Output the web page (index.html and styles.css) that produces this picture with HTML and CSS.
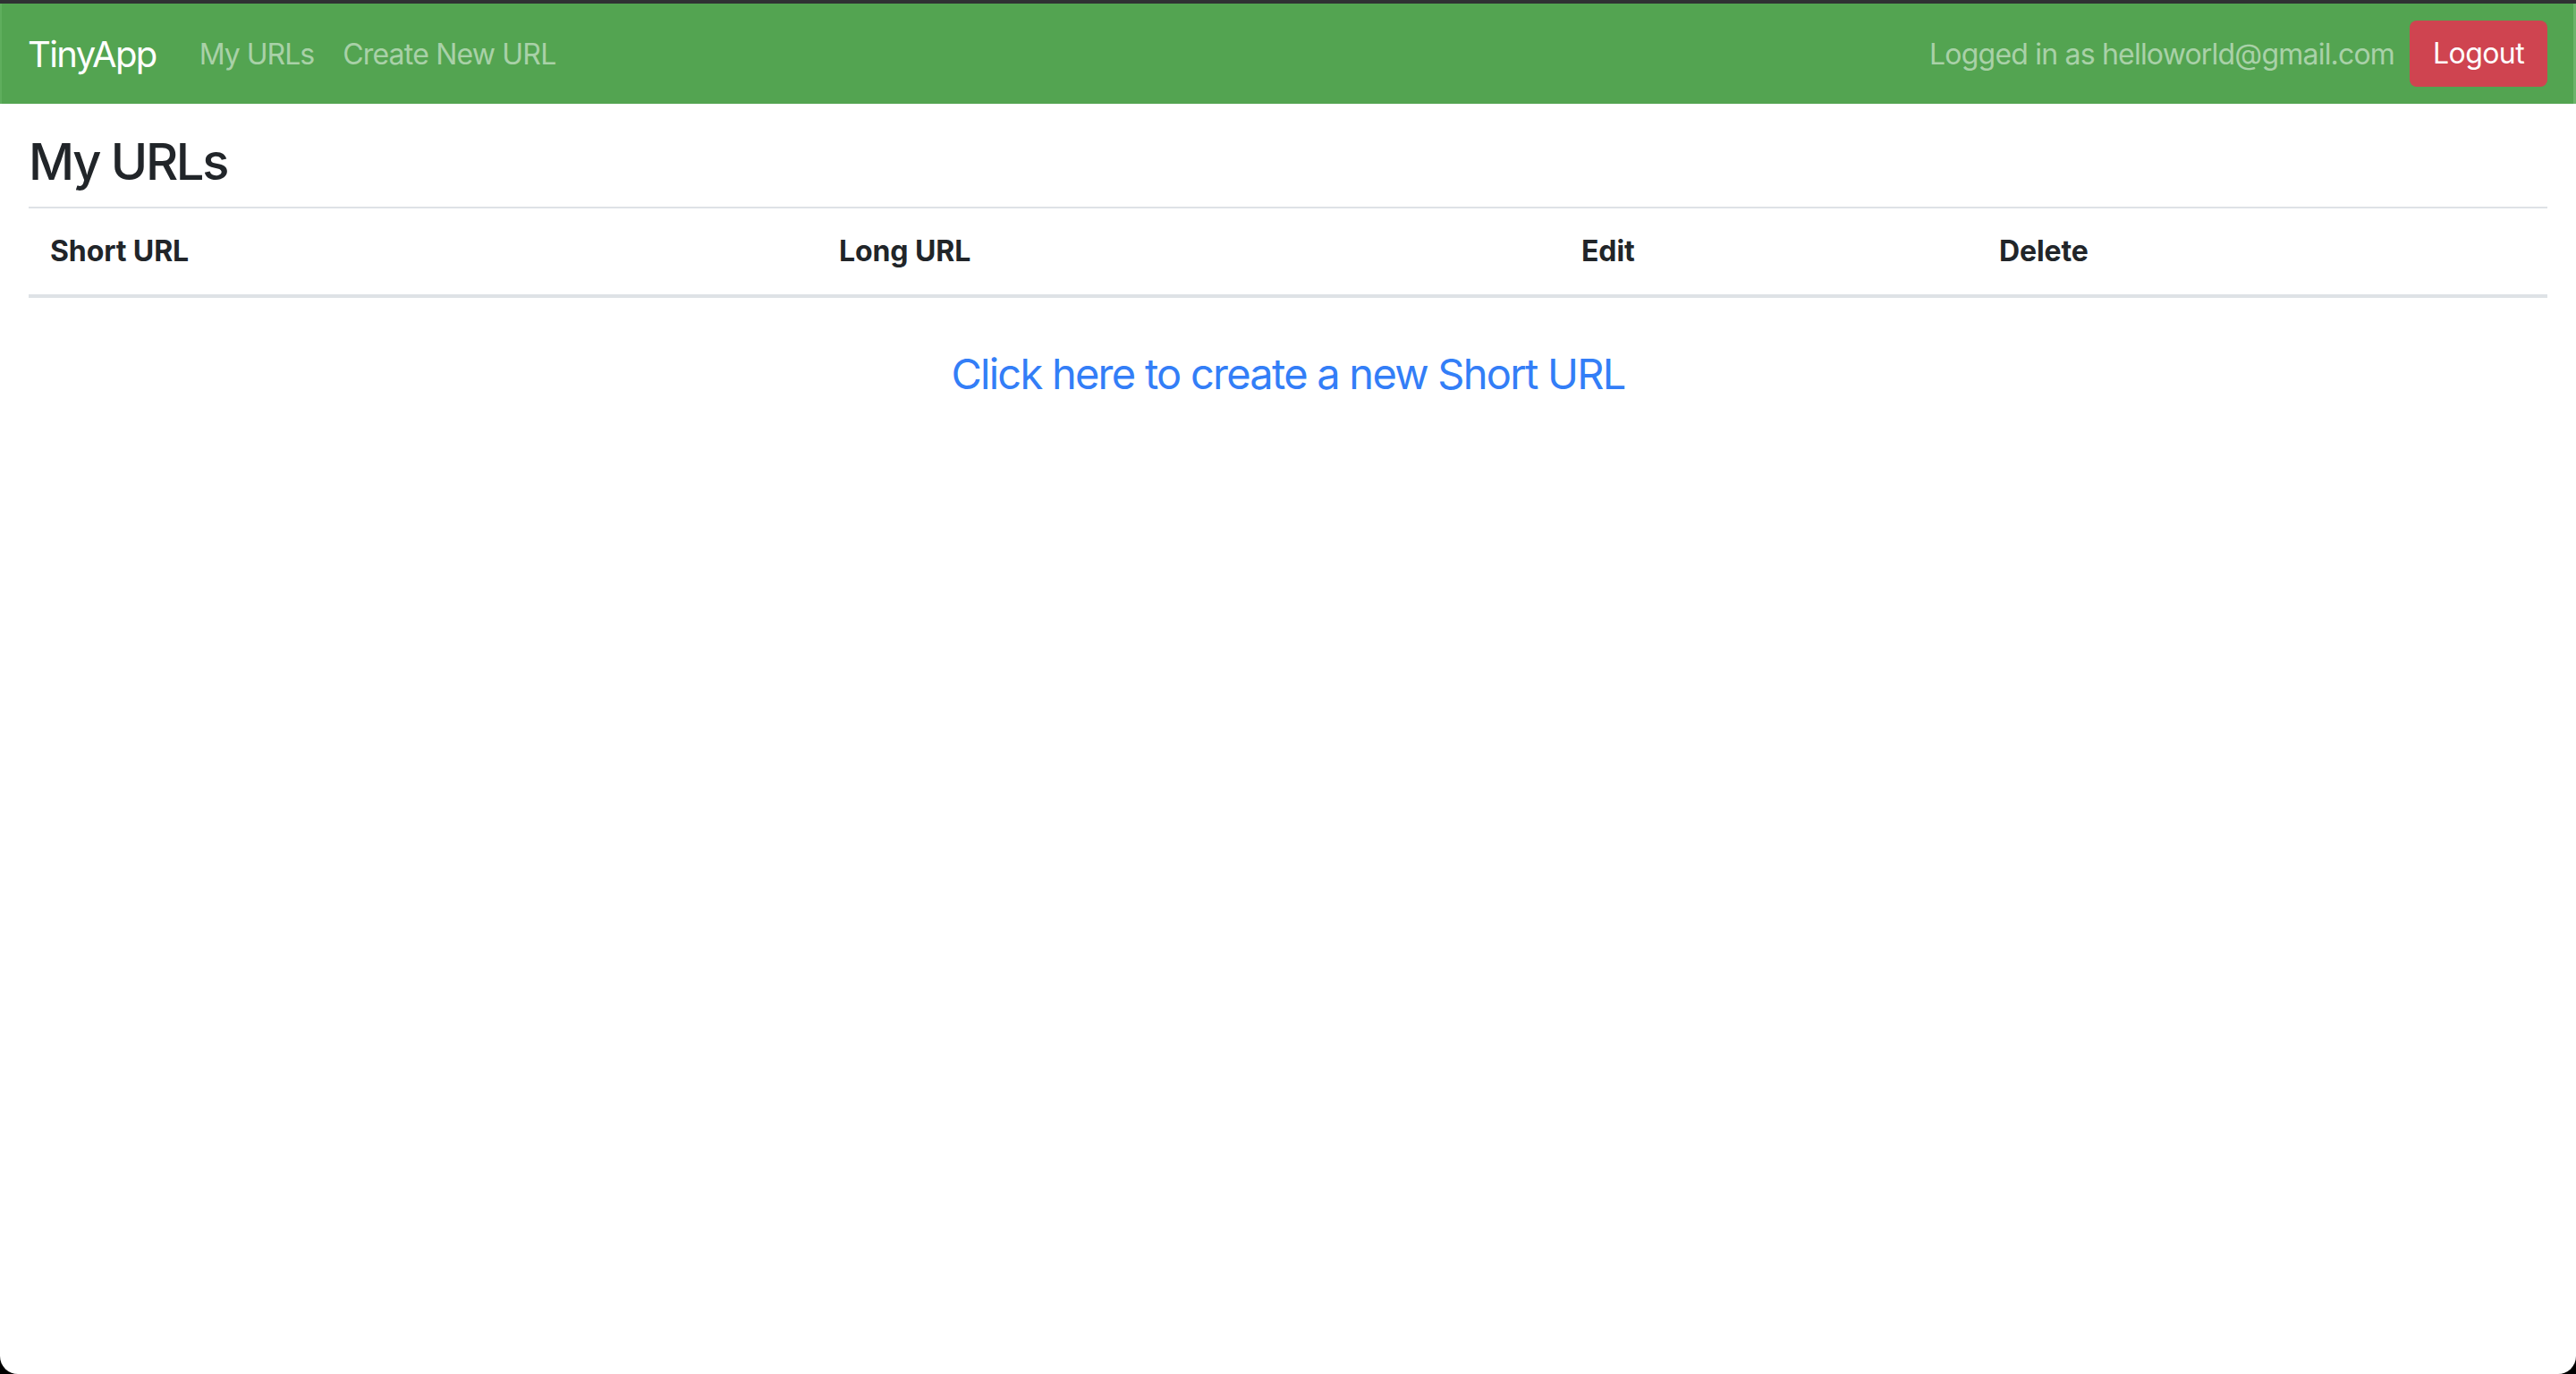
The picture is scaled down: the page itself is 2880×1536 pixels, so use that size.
FILE: index.html
```html
<!DOCTYPE html>
<html lang="en">
<head>
<meta charset="utf-8">
<title>TinyApp</title>
<link rel="stylesheet" href="styles.css">
</head>
<body>
<div class="window">
  <nav class="navbar">
    <a class="brand" href="#">TinyApp</a>
    <a class="nav-link" href="#">My URLs</a>
    <a class="nav-link" href="#">Create New URL</a>
    <div class="spacer"></div>
    <span class="user">Logged in as helloworld@gmail.com</span>
    <button class="btn-logout" type="button">Logout</button>
  </nav>
  <main class="container">
    <h3 class="title">My URLs</h3>
    <table class="urls">
      <thead>
        <tr>
          <th class="col-short">Short URL</th>
          <th class="col-long">Long URL</th>
          <th class="col-edit">Edit</th>
          <th class="col-delete">Delete</th>
        </tr>
      </thead>
    </table>
    <h4 class="create"><a href="#">Click here to create a new Short URL</a></h4>
  </main>
</div>
</body>
</html>
```
FILE: styles.css
```css
html {
  background: #000;
}
body {
  margin: 0;
  font-family: "Inter", "Roboto", "Liberation Sans", sans-serif;
  color: #212529;
}
.window {
  height: 1536px;
  box-sizing: border-box;
  background: #fff;
  border-top: 4px solid #2f3133;
  border-radius: 0 0 20px 20px;
  overflow: hidden;
}
.navbar {
  height: 112px;
  display: flex;
  align-items: center;
  padding: 0 32px 0 31px;
  background: #53a451;
  box-shadow: inset 2px 0 0 #5fae5d, inset -3px 0 0 #6cb46a;
}
.navbar a {
  text-decoration: none;
}
.brand {
  font-size: 40px;
  color: #fff;
  margin-right: 32px;
  letter-spacing: -1.6px;
}
.nav-link {
  font-size: 32px;
  color: rgba(255, 255, 255, 0.5);
  padding: 0 16px;
  letter-spacing: -1px;
}
.nav-link + .nav-link {
  letter-spacing: -0.8px;
}
.spacer {
  flex: 1;
}
.user {
  font-size: 32px;
  color: rgba(255, 255, 255, 0.5);
  margin-right: 17px;
  letter-spacing: -0.8px;
}
.btn-logout {
  font-family: inherit;
  font-size: 32px;
  line-height: 48px;
  padding: 13px 26px;
  border: none;
  border-radius: 8px;
  background: #cf4450;
  color: #fff;
  letter-spacing: -0.6px;
}
.container {
  padding: 32px 32px 0 32px;
}
.title {
  margin: 0 0 16px;
  font-size: 56px;
  font-weight: 500;
  line-height: 67px;
  letter-spacing: -2.3px;
}
.urls {
  width: 100%;
  border-collapse: collapse;
  table-layout: fixed;
}
.urls th {
  box-sizing: border-box;
  text-align: left;
  padding: 24px;
  line-height: 48px;
  font-size: 32px;
  font-weight: 700;
  border-top: 2px solid #dee2e6;
  border-bottom: 4px solid #dee2e6;
  letter-spacing: -0.1px;
}
.col-short { width: 882px; }
.col-long { width: 830px; }
.col-edit { width: 467px; }
.create {
  margin: 56px 0 0;
  text-align: center;
  font-size: 47px;
  font-weight: 400;
  line-height: 58px;
  letter-spacing: -1.75px;
}
.create a {
  color: #337ef7;
  text-decoration: none;
}
```
